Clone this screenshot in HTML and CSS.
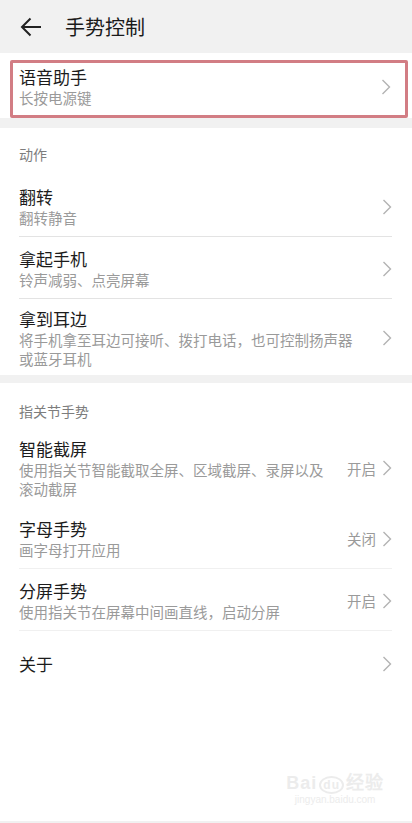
FILE: index.html
```html
<!DOCTYPE html>
<html lang="zh-CN">
<head>
  <meta charset="UTF-8" />
  <meta name="viewport" content="width=device-width, initial-scale=1.0"/>
  <title>手势控制</title>
  <link rel="stylesheet" href="styles.css">
</head>
<body>

  <header class="topbar">
    <svg class="back" width="22" height="20" viewBox="0 0 22 20">
      <path d="M21 10H2M10.5 1.5L2 10l8.5 8.5" fill="none" stroke="#222" stroke-width="2"/>
    </svg>
    <h1>手势控制</h1>
  </header>

  <section class="group first">
    <div class="row marked">
      <div class="text">
        <div class="title">语音助手</div>
        <div class="sub">长按电源键</div>
      </div>
      <svg class="chev" width="10" height="16" viewBox="0 0 10 16"><path d="M1.5 1l7 7-7 7" fill="none" stroke="#b3b3b3" stroke-width="1.4"/></svg>
    </div>
  </section>

  <section class="group">
    <div class="group-head">动作</div>
    <div class="row">
      <div class="text">
        <div class="title">翻转</div>
        <div class="sub">翻转静音</div>
      </div>
      <svg class="chev" width="10" height="16" viewBox="0 0 10 16"><path d="M1.5 1l7 7-7 7" fill="none" stroke="#b3b3b3" stroke-width="1.4"/></svg>
    </div>
    <div class="row">
      <div class="text">
        <div class="title">拿起手机</div>
        <div class="sub">铃声减弱、点亮屏幕</div>
      </div>
      <svg class="chev" width="10" height="16" viewBox="0 0 10 16"><path d="M1.5 1l7 7-7 7" fill="none" stroke="#b3b3b3" stroke-width="1.4"/></svg>
    </div>
    <div class="row last">
      <div class="text">
        <div class="title">拿到耳边</div>
        <div class="sub">将手机拿至耳边可接听、拨打电话，也可控制扬声器或蓝牙耳机</div>
      </div>
      <svg class="chev" width="10" height="16" viewBox="0 0 10 16"><path d="M1.5 1l7 7-7 7" fill="none" stroke="#b3b3b3" stroke-width="1.4"/></svg>
    </div>
  </section>

  <section class="group tail">
    <div class="group-head second">指关节手势</div>
    <div class="row plain">
      <div class="text">
        <div class="title">智能截屏</div>
        <div class="sub">使用指关节智能截取全屏、区域截屏、录屏以及滚动截屏</div>
      </div>
      <span class="value">开启</span>
      <svg class="chev" width="10" height="16" viewBox="0 0 10 16"><path d="M1.5 1l7 7-7 7" fill="none" stroke="#b3b3b3" stroke-width="1.4"/></svg>
    </div>
    <div class="row faint">
      <div class="text">
        <div class="title">字母手势</div>
        <div class="sub">画字母打开应用</div>
      </div>
      <span class="value">关闭</span>
      <svg class="chev" width="10" height="16" viewBox="0 0 10 16"><path d="M1.5 1l7 7-7 7" fill="none" stroke="#b3b3b3" stroke-width="1.4"/></svg>
    </div>
    <div class="row faint">
      <div class="text">
        <div class="title">分屏手势</div>
        <div class="sub">使用指关节在屏幕中间画直线，启动分屏</div>
      </div>
      <span class="value">开启</span>
      <svg class="chev" width="10" height="16" viewBox="0 0 10 16"><path d="M1.5 1l7 7-7 7" fill="none" stroke="#b3b3b3" stroke-width="1.4"/></svg>
    </div>
    <div class="row single">
      <div class="text">
        <div class="title">关于</div>
      </div>
      <svg class="chev" width="10" height="16" viewBox="0 0 10 16"><path d="M1.5 1l7 7-7 7" fill="none" stroke="#b3b3b3" stroke-width="1.4"/></svg>
    </div>

    <div class="watermark">
      <div class="wm-logo">Bai<span class="paw">du</span>经验</div>
      <div class="wm-url">jingyan.baidu.com</div>
    </div>
  </section>

</body>
</html>
```

FILE: styles.css
```css
body {
  margin: 0;
  padding: 0;
  background-color: #f1f1f1;
  font-family: "Noto Sans CJK SC", "Noto Sans", sans-serif;
  color: #1c1c1c;
}
.topbar {
  height: 53px;
  display: flex;
  align-items: center;
  padding-left: 20px;
  background-color: #f1f1f1;
}
.topbar .back {
  display: block;
}
.topbar h1 {
  margin: 0 0 0 23px;
  font-size: 20px;
  font-weight: normal;
  color: #1a1a1a;
}
.group {
  background-color: #fff;
  margin-bottom: 8px;
}
.group.first {
  padding: 7px 4px 0 10px;
  margin-bottom: 10px;
}
.group.tail {
  margin-bottom: 0;
  min-height: 438px;
  position: relative;
}
.group-head {
  padding: 17px 19px 12px;
  font-size: 14px;
  line-height: 18px;
  color: #7d7d7d;
}
.group-head.second {
  padding: 19px 19px 7px;
}
.row {
  display: flex;
  align-items: center;
  margin: 0 20px 0 19px;
  padding: 11px 0 9px;
  border-bottom: 1px solid #e3e3e3;
}
.row.last {
  padding: 9px 0 7px;
}
.row.last,
.row.plain,
.row.single {
  border-bottom: none;
}
.row.faint {
  border-bottom-color: #f0f0f0;
}
.row.single {
  padding: 22px 0;
}
.row.marked {
  margin: 0;
  padding: 3px 14px 7px 6px;
  border: 3px solid #d27d84;
  border-radius: 2px;
}
.text {
  flex: 1;
}
.title {
  font-size: 17px;
  line-height: 22px;
}
.sub {
  font-size: 14.5px;
  line-height: 19px;
  color: #9a9a9a;
  padding-right: 18px;
}
.marked .sub {
  line-height: 20px;
}
.value {
  font-size: 14.5px;
  color: #9a9a9a;
  margin-right: 6px;
}
.chev {
  display: block;
  flex: none;
}
.watermark {
  position: absolute;
  right: 28px;
  bottom: 16px;
  color: #ececec;
  text-align: center;
}
.wm-logo {
  font-family: "Liberation Sans", sans-serif;
  font-size: 18px;
  font-weight: bold;
  letter-spacing: 1px;
}
.wm-logo .paw {
  font-size: 12px;
  border: 2px solid #ececec;
  border-radius: 50%;
  padding: 0 2px;
  margin: 0 2px;
}
.wm-url {
  font-family: "Liberation Sans", sans-serif;
  font-size: 10px;
}
```
